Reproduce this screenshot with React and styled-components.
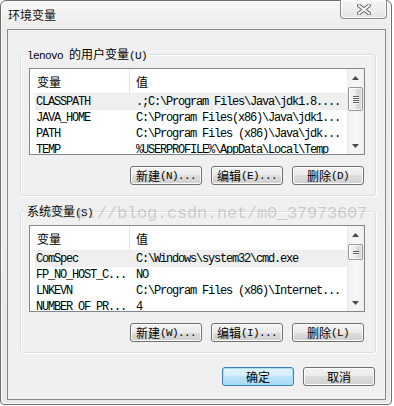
import React from 'react';
import styled, { createGlobalStyle } from 'styled-components';

const Global = createGlobalStyle`
  html, body { margin: 0; padding: 0; background: #ffffff; }
  body {
    font-family: "Noto Sans CJK SC", "Liberation Sans", sans-serif;
    font-size: 12px;
    color: #000;
  }
`;

const Stage = styled.div`
  position: relative;
  width: 394px;
  height: 406px;
`;

const Window = styled.div`
  box-sizing: border-box;
  width: 392px;
  height: 405px;
  border: 1px solid #6e6e6e;
  border-radius: 6px 6px 4px 4px;
  background: linear-gradient(#f7f7f7, #ececec 28px, #e9e9e9);
  box-shadow: inset 0 0 0 1px rgba(255, 255, 255, 0.85);
  padding: 0 5px 4px 6px;
  display: flex;
  flex-direction: column;
`;

const TitleBar = styled.div`
  height: 28px;
  display: flex;
  justify-content: space-between;
  align-items: flex-start;
`;

const Title = styled.div`
  padding: 6px 0 0 1px;
  font-size: 12px;
  line-height: 16px;
  color: #111;
`;

const CloseButton = styled.div`
  box-sizing: border-box;
  width: 47px;
  height: 19px;
  margin: -1px -1px 0 0;
  border: 1px solid #8a8a8a;
  border-top: none;
  border-radius: 0 0 4px 4px;
  background: linear-gradient(#f6f6f6, #e4e4e4);
  box-shadow: inset 0 0 0 1px rgba(255, 255, 255, 0.8);
  display: flex;
  align-items: center;
  justify-content: center;
`;

const Client = styled.div`
  flex: 1;
  border: 1px solid #8a8a8a;
  background: #f0f0f0;
  padding-left: 12px;
  display: flex;
  flex-direction: column;
`;

const Group = styled.section`
  position: relative;
  box-sizing: border-box;
  width: 356px;
  margin-top: ${(p) => p.$top}px;
  border: 1px solid #d5dfe5;
  border-radius: 3px;
  box-shadow: inset 1px 1px 0 #ffffff, 1px 1px 0 #ffffff;
  padding: 13px 10px 10px 8px;
`;

const Legend = styled.div`
  position: absolute;
  left: 5px;
  top: -9px;
  padding: 0 1px;
  background: #f0f0f0;
  line-height: 16px;
  white-space: nowrap;
`;

const L = styled.span`
  font-family: "Liberation Mono", monospace;
  font-size: 11px;
  letter-spacing: -0.6px;
`;

const ListBox = styled.div`
  box-sizing: border-box;
  width: 336px;
  height: 87px;
  border: 1px solid #828790;
  background: #ffffff;
  display: flex;
  overflow: hidden;
`;

const ListContent = styled.div`
  flex: 1;
  min-width: 0;
  overflow: hidden;
`;

const Header = styled.div`
  box-sizing: border-box;
  height: 25px;
  display: flex;
  border-bottom: 1px solid #ededed;
`;

const HeaderCell = styled.div`
  box-sizing: border-box;
  display: flex;
  align-items: center;
  ${(p) => (p.$first ? 'width: 100px; padding-left: 7px; border-right: 1px solid #e5e5e5;' : 'flex: 1; padding-left: 6px;')}
`;

const Row = styled.div`
  height: 16px;
  margin-left: 5px;
  display: flex;
  background: ${(p) => (p.$selected ? '#efefef' : 'transparent')};
  font-family: "Liberation Mono", monospace;
  font-size: 12px;
  letter-spacing: -1.2px;
  line-height: 16px;
  color: #000;
`;

const Cell = styled.div`
  box-sizing: border-box;
  padding-left: 1px;
  white-space: nowrap;
  overflow: hidden;
  ${(p) => (p.$first ? 'width: 100px;' : 'flex: 1; min-width: 0;')}
`;

const ScrollBar = styled.div`
  width: 17px;
  display: flex;
  flex-direction: column;
  background: linear-gradient(to right, #e4e4e4 0, #f1f1f1 1px, #f6f6f6 50%, #f1f1f1 16px, #e6e6e6 17px);
`;

const ArrowBox = styled.div`
  height: 17px;
  display: flex;
  align-items: center;
  justify-content: center;
  margin-top: ${(p) => (p.$down ? 'auto' : '0')};
`;

const Thumb = styled.div`
  box-sizing: border-box;
  height: ${(p) => p.$h}px;
  margin: 1px 1px 0 1px;
  border: 1px solid #979797;
  border-radius: 2px;
  background: linear-gradient(to right, #f4f4f4, #ececec 50%, #dedede 51%, #d2d2d2);
  box-shadow: inset 0 0 0 1px rgba(255, 255, 255, 0.75);
  display: flex;
  flex-direction: column;
  align-items: center;
  justify-content: center;
  gap: 1px;
`;

const Grip = styled.div`
  width: 6px;
  height: 1px;
  background: #5c5c5c;
  box-shadow: 0 1px 0 #ffffff;
`;

const ButtonRow = styled.div`
  display: flex;
  justify-content: flex-end;
  gap: 9px;
  width: 335px;
  margin-top: 11px;
`;

const Button = styled.div`
  box-sizing: border-box;
  width: 72px;
  height: 19px;
  border: 1px solid ${(p) => (p.$default ? '#3c7fb1' : '#707070')};
  border-radius: 3px;
  background: ${(p) =>
    p.$default
      ? 'linear-gradient(#e5f4fc, #d4edfb 50%, #bfe4f8 50%, #a9d8f2)'
      : 'linear-gradient(#f2f2f2, #ebebeb 50%, #dddddd 50%, #cfcfcf)'};
  box-shadow: inset 0 0 0 1px ${(p) => (p.$default ? '#a6e2fa' : '#fcfcfc')};
  display: flex;
  align-items: center;
  justify-content: center;
  font-size: 12px;
  line-height: 16px;
  color: #000;
  white-space: nowrap;
`;

const Footer = styled.div`
  display: flex;
  justify-content: flex-end;
  gap: 9px;
  width: 355px;
  margin-top: 14px;
`;

const Watermark = styled.div`
  position: absolute;
  left: 47px;
  top: 204px;
  font-family: "Liberation Mono", monospace;
  font-size: 17px;
  line-height: 20px;
  letter-spacing: -0.2px;
  color: rgba(140, 140, 140, 0.38);
  white-space: nowrap;
  pointer-events: none;
`;

const CloseIcon = () => (
  <svg width="14" height="11" viewBox="0 0 14 11">
    <path d="M2 1.5 L12 9.5 M12 1.5 L2 9.5" stroke="#6a6a6a" strokeWidth="4" strokeLinecap="square" />
    <path d="M2 1.5 L12 9.5 M12 1.5 L2 9.5" stroke="#f4f4f4" strokeWidth="2" strokeLinecap="square" />
  </svg>
);

const Arrow = ({ down }) => (
  <svg width="7" height="4" viewBox="0 0 7 4">
    {down ? <path d="M0 0 H7 L3.5 4 Z" fill="#4a4a4a" /> : <path d="M0 4 H7 L3.5 0 Z" fill="#4a4a4a" />}
  </svg>
);

const VarList = ({ rows, thumb }) => (
  <ListBox>
    <ListContent>
      <Header>
        <HeaderCell $first>变量</HeaderCell>
        <HeaderCell>值</HeaderCell>
      </Header>
      {rows.map(([name, value, sel]) => (
        <Row key={name} $selected={sel}>
          <Cell $first>{name}</Cell>
          <Cell>{value}</Cell>
        </Row>
      ))}
    </ListContent>
    <ScrollBar>
      <ArrowBox>
        <Arrow />
      </ArrowBox>
      <Thumb $h={thumb}>
        {thumb > 20 && <Grip />}
        <Grip />
        <Grip />
        {thumb > 20 && <Grip />}
      </Thumb>
      <ArrowBox $down>
        <Arrow down />
      </ArrowBox>
    </ScrollBar>
  </ListBox>
);

const userVars = [
  ['CLASSPATH', '.;C:\\Program Files\\Java\\jdk1.8....', true],
  ['JAVA_HOME', 'C:\\Program Files(x86)\\Java\\jdk1...'],
  ['PATH', 'C:\\Program Files (x86)\\Java\\jdk...'],
  ['TEMP', '%USERPROFILE%\\AppData\\Local\\Temp'],
  ['TMP', '%USERPROFILE%\\AppData\\Local\\Temp'],
];

const sysVars = [
  ['ComSpec', 'C:\\Windows\\system32\\cmd.exe', true],
  ['FP_NO_HOST_C...', 'NO'],
  ['LNKEVN', 'C:\\Program Files (x86)\\Internet...'],
  ['NUMBER_OF_PR...', '4'],
  ['OS', 'Windows_NT'],
];

export default function App() {
  return (
    <Stage>
      <Global />
      <Window>
        <TitleBar>
          <Title>环境变量</Title>
          <CloseButton>
            <CloseIcon />
          </CloseButton>
        </TitleBar>
        <Client>
          <Group $top={24}>
            <Legend>
              <L>lenovo </L>的用户变量<L>(U)</L>
            </Legend>
            <VarList rows={userVars} thumb={24} />
            <ButtonRow>
              <Button>新建<L>(N)...</L></Button>
              <Button>编辑<L>(E)...</L></Button>
              <Button>删除<L>(D)</L></Button>
            </ButtonRow>
          </Group>
          <Group $top={15}>
            <Legend>
              系统变量<L>(S)</L>
            </Legend>
            <VarList rows={sysVars} thumb={16} />
            <ButtonRow>
              <Button>新建<L>(W)...</L></Button>
              <Button>编辑<L>(I)...</L></Button>
              <Button>删除<L>(L)</L></Button>
            </ButtonRow>
          </Group>
          <Footer>
            <Button $default>确定</Button>
            <Button>取消</Button>
          </Footer>
        </Client>
      </Window>
      <Watermark>http://blog.csdn.net/m0_37973607</Watermark>
    </Stage>
  );
}
